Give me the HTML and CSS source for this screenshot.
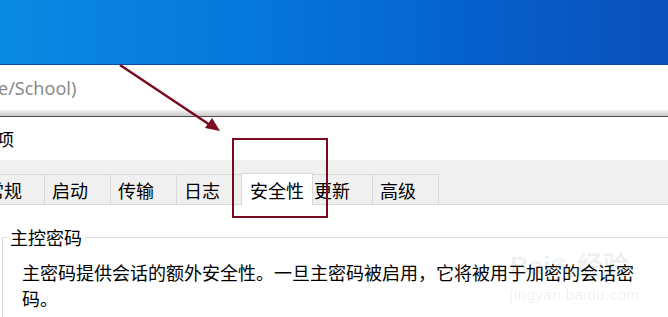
FILE: index.html
```html
<!DOCTYPE html>
<html lang="zh-CN">
<head>
    <meta charset="UTF-8">
    <title>安全性</title>
    <link rel="stylesheet" href="styles.css">
</head>
<body>
    <div class="screen">
        <div class="desktop"></div>

        <div class="address-bar">
            <span class="address-text">e/School)</span>
        </div>
        <div class="address-shadow"></div>

        <div class="dialog">
            <div class="dialog-title">项</div>

            <div class="tabs">
                <div class="tab tab-first">常规</div>
                <div class="tab">启动</div>
                <div class="tab">传输</div>
                <div class="tab">日志</div>
                <div class="tab active">安全性</div>
                <div class="tab">更新</div>
                <div class="tab">高级</div>
            </div>

            <div class="panel">
                <fieldset class="group">
                    <legend>主控密码</legend>
                    <p class="group-text">主密码提供会话的额外安全性。一旦主密码被启用，它将被用于加密的会话密码。</p>
                </fieldset>
            </div>
        </div>

        <!-- annotation drawn over the screenshot -->
        <svg class="annotation" width="668" height="317" viewBox="0 0 668 317">
            <line x1="120" y1="65" x2="210" y2="125" stroke="#7b0a20" stroke-width="2.5"/>
            <polygon points="220,131 205,128 212,118" fill="#7b0a20"/>
            <rect x="233" y="139" width="94" height="78" fill="none" stroke="#7b0a20" stroke-width="2"/>
        </svg>

        <div class="watermark">
            <div class="wm-logo">Bai<span class="wm-paw">&#x1F43E;</span>经验</div>
            <div class="wm-url">jingyan.baidu.com</div>
        </div>
    </div>
</body>
</html>
```

FILE: styles.css
```css
body {
    margin: 0;
    padding: 0;
    background: #fff;
    font-family: "Noto Sans CJK SC", "Noto Sans", sans-serif;
    color: #000;
}

.screen {
    position: relative;
    width: 668px;
    height: 317px;
    overflow: hidden;
}

.desktop {
    height: 64px;
    background: linear-gradient(90deg, #0a8ae3 0%, #0676db 40%, #0561cd 70%, #0a50bb 100%);
    border-bottom: 1px solid #0a4ea3;
}

.address-bar {
    height: 45px;
    background: #fff;
    display: flex;
    align-items: center;
}

.address-text {
    margin-left: -2px;
    font-family: "Noto Sans", sans-serif;
    font-size: 18px;
    color: #8a8a8a;
}

.address-shadow {
    height: 6px;
    background: linear-gradient(180deg, #f4f4f4 0%, #c9c9c9 100%);
    border-bottom: 1px solid #4f4f4f;
}

.dialog-title {
    height: 43px;
    line-height: 43px;
    font-size: 17px;
    text-indent: -3px;
}

.tabs {
    display: flex;
    align-items: flex-end;
    height: 44px;
    background: #f0f0f0;
    border-bottom: 1px solid #d9d9d9;
}

.tab {
    height: 29px;
    line-height: 30px;
    padding: 0 22px 0 7px;
    font-size: 18px;
    background: #f0f0f0;
    border-top: 1px solid #d9d9d9;
    border-right: 1px solid #d9d9d9;
    white-space: nowrap;
}

.tab-first {
    margin-left: -21px;
}

.tab.active {
    z-index: 1;
    height: 31px;
    line-height: 32px;
    margin: 0 -6px -1px -2px;
    padding: 0 8px;
    background: #fff;
    border-left: 1px solid #d9d9d9;
}

.panel {
    padding-top: 21px;
    height: 90px;
}

.group {
    margin: 0 0 0 2px;
    width: 700px;
    padding: 0 0 0 19px;
    border: 1px solid #dcdcdc;
    border-right: none;
    min-height: 120px;
}

.group legend {
    margin-left: -15px;
    padding: 0 3px;
    font-size: 18px;
    line-height: 22px;
}

.group-text {
    margin: 11px 0 0;
    max-width: 620px;
    font-size: 18px;
    line-height: 26px;
}

.annotation {
    position: absolute;
    left: 0;
    top: 0;
    pointer-events: none;
}

.watermark {
    position: absolute;
    left: 510px;
    top: 248px;
    color: rgba(0, 0, 0, 0.07);
    font-family: "Liberation Sans", sans-serif;
    pointer-events: none;
}

.wm-logo {
    font-size: 26px;
    font-weight: bold;
    line-height: 36px;
}

.wm-paw {
    font-size: 22px;
}

.wm-url {
    font-size: 15px;
    line-height: 18px;
    letter-spacing: 0.5px;
}
```
